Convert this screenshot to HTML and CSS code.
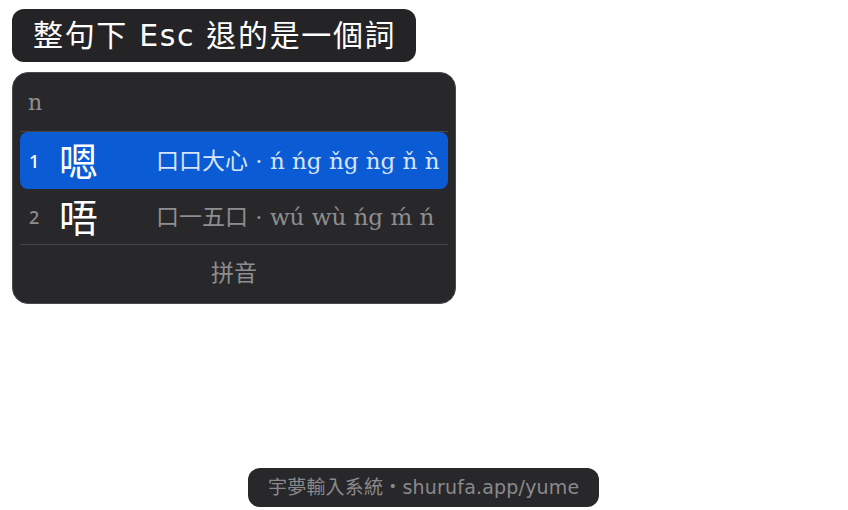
FILE: index.html
```html
<!DOCTYPE html>
<html lang="zh-Hant">
<head>
<meta charset="utf-8">
<link rel="stylesheet" href="styles.css">
</head>
<body>
<div class="page">
  <div class="title">整句下 Esc 退的是一個詞</div>
  <div class="panel">
    <div class="preedit">n</div>
    <div class="list">
      <div class="cand active">
        <span class="num">1</span>
        <span class="word">嗯</span>
        <span class="comment">口口大心 · ń ńg ňg ǹg ň ǹ</span>
      </div>
      <div class="cand">
        <span class="num">2</span>
        <span class="word">唔</span>
        <span class="comment">口一五口 · wú wù ńg ḿ ń</span>
      </div>
    </div>
    <div class="footer">拼音</div>
  </div>
  <div class="spacer"></div>
  <div class="credit">宇夢輸入系統・shurufa.app/yume</div>
</div>
</body>
</html>
```
FILE: styles.css
```css
html, body {
  margin: 0;
  padding: 0;
  background: #ffffff;
}
.page {
  width: 848px;
  height: 510px;
  box-sizing: border-box;
  padding: 9px 12px 3px 12px;
  display: flex;
  flex-direction: column;
  align-items: flex-start;
}
.title {
  height: 53px;
  box-sizing: border-box;
  padding: 0 20px 0 21px;
  background: #242426;
  color: #ffffff;
  border-radius: 12px;
  font-family: "DejaVu Sans", "Noto Sans CJK TC", sans-serif;
  font-size: 30px;
  letter-spacing: 1.65px;
  line-height: 53px;
  white-space: nowrap;
}
.panel {
  margin-top: 10px;
  width: 444px;
  height: 232px;
  box-sizing: border-box;
  background: #28282a;
  border: 1.5px solid #4a4a4d;
  border-radius: 16px;
  padding: 0 7px;
  display: flex;
  flex-direction: column;
}
.preedit {
  height: 59px;
  box-sizing: border-box;
  padding-left: 8px;
  border-bottom: 1px solid #454547;
  color: #8e8e90;
  font-family: "DejaVu Serif", "Liberation Serif", serif;
  font-size: 22px;
  line-height: 59px;
}
.list {
  border-bottom: 1px solid #454547;
}
.cand {
  height: 55px;
  display: grid;
  grid-template-columns: 39px 97px 1fr;
  align-items: center;
  border-radius: 8px;
  white-space: nowrap;
}
.cand.active {
  height: 57px;
  background: #0a5bd4;
}
.num {
  padding-left: 9px;
  font-family: "Noto Sans", sans-serif;
  font-size: 18px;
  font-weight: 500;
  color: #8e8e90;
}
.word {
  font-family: "Noto Sans CJK TC", sans-serif;
  font-size: 39px;
  color: #ffffff;
  line-height: 1;
  margin-top: -2px;
}
.comment {
  font-family: "DejaVu Serif", "Noto Sans CJK TC", serif;
  font-size: 23px;
  color: #8e8e90;
  margin-top: -3px;
}
.cand.active .num { color: #ffffff; }
.cand.active .comment { color: #d6e4fb; }
.footer {
  flex: 1;
  display: flex;
  align-items: center;
  justify-content: center;
  color: #8e8e90;
  font-family: "Noto Sans CJK TC", sans-serif;
  font-size: 23px;
  padding-bottom: 7px;
}
.spacer { flex: 1; }
.credit {
  align-self: flex-start;
  margin-left: 236px;
  height: 39px;
  box-sizing: border-box;
  padding: 0 20px;
  background: #28282a;
  border-radius: 12px;
  color: #8a8a8c;
  font-family: "DejaVu Sans", "Noto Sans CJK TC", sans-serif;
  font-size: 19px;
  letter-spacing: 0.2px;
  line-height: 39px;
  white-space: nowrap;
}
```
